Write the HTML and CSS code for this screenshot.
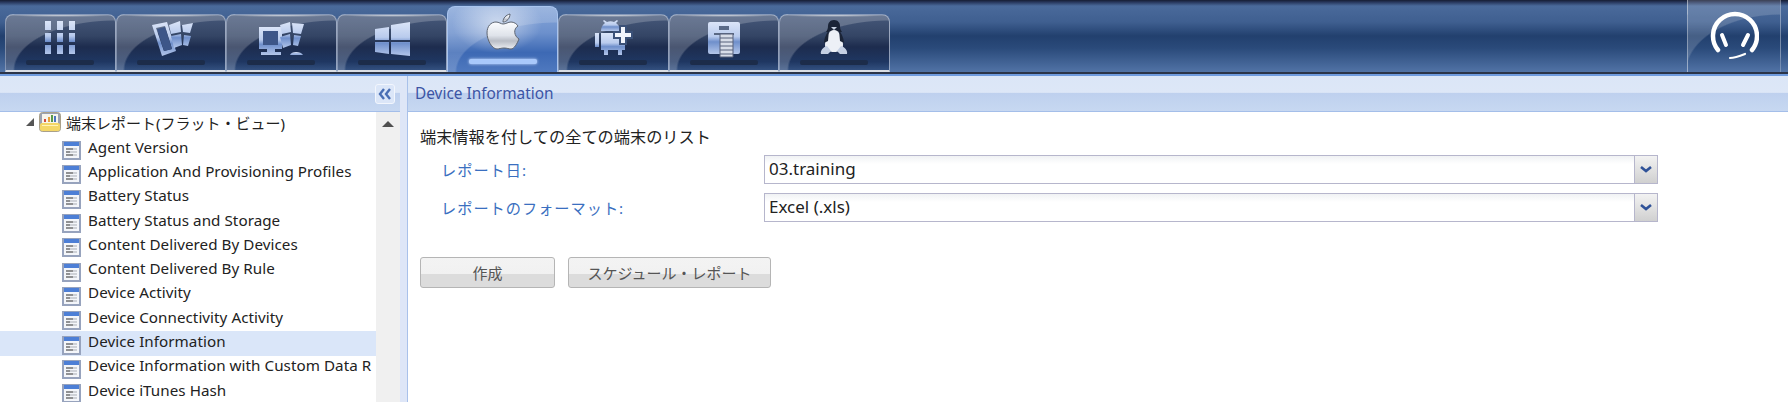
FILE: index.html
```html
<!DOCTYPE html>
<html lang="ja">

<head>
    <meta charset="UTF-8">
    <title>Device Information</title>
    <link rel="stylesheet" href="styles.css">
</head>

<body>
    <!-- shared gradients and report icon -->
    <svg class="defs" aria-hidden="true">
        <defs>
            <linearGradient id="ico" x1="0" y1="0" x2="0" y2="1">
                <stop offset="0" stop-color="#dbe5f8" />
                <stop offset=".45" stop-color="#b9cbed" />
                <stop offset=".62" stop-color="#6f8fcb" />
                <stop offset="1" stop-color="#b3c6ea" />
            </linearGradient>
            <linearGradient id="apple" x1="0" y1="0" x2="0" y2="1">
                <stop offset="0" stop-color="#fbfcff" />
                <stop offset=".5" stop-color="#dfe3ea" />
                <stop offset=".7" stop-color="#b9bdc6" />
                <stop offset="1" stop-color="#eceef2" />
            </linearGradient>
            <symbol id="report" viewBox="0 0 19 19">
                <rect x="1" y="1" width="17" height="17" fill="#f4f6fa" stroke="#97a3bd" stroke-width="2" />
                <rect x="2" y="1" width="15" height="4" fill="#4d7fd6" />
                <path d="M4 8h7M4 11h4M4 14h7" stroke="#2c2c2c" />
                <path d="M11 8h4M8 11h7M11 14h4" stroke="#a9adb5" />
            </symbol>
        </defs>
    </svg>

    <div class="topbar">
        <div class="tab">
            <svg class="tab-icon" width="40" height="40" viewBox="0 0 40 40" fill="url(#ico)">
                <path d="M5 2h6v9H5zM17 2h6v9h-6zM29 2h6v9h-6zM5 14h6v9H5zM17 14h6v9h-6zM29 14h6v9h-6zM5 26h6v9H5zM17 26h6v9h-6zM29 26h6v9h-6z" />
            </svg>
            <span class="tab-bar"></span>
        </div>
        <div class="tab">
            <svg class="tab-icon" width="48" height="40" viewBox="0 0 48 40" fill="url(#ico)">
                <path d="M5 6l15-3 9 29-14 5zM9 9l8 23 8-2-7-23z" fill-rule="evenodd" />
                <path d="M10 10l8-2 7 22-8 2z" fill="#3d5688" />
                <path d="M22 6l11-4 1 11-10 2zM35 6l11-2-3 10-7-1zM24 17l10-2 1 11-8 3zM37 16l7 1-3 10-5-1z" />
            </svg>
            <span class="tab-bar"></span>
        </div>
        <div class="tab">
            <svg class="tab-icon" width="48" height="40" viewBox="0 0 48 40" fill="url(#ico)">
                <path d="M2 8h23v22H2zM6 12v14h15V12zM10 30h8v3h6v3H4v-3h6z" fill-rule="evenodd" />
                <path d="M6 12h15v14H6z" fill="#3d5688" />
                <path d="M23 6l10-3 1 10-9 2zM35 4l12 1-3 10-8-1zM23 18l10-3 1 11-8 3zM37 16l7 1-3 10-5-1z" />
                <path d="M33 36c1-4 11-4 13 0z" />
            </svg>
            <span class="tab-bar"></span>
        </div>
        <div class="tab">
            <svg class="tab-icon" width="40" height="40" viewBox="0 0 40 40" fill="url(#ico)">
                <path d="M3 10l14-2v13H3zM19 6l19-3v18H19zM3 23h14v12L3 33zM19 23h19v14l-19-2z" />
            </svg>
            <span class="tab-bar"></span>
        </div>
        <div class="tab tab-active">
            <svg class="tab-icon" width="34" height="40" viewBox="0 0 34 40" fill="url(#apple)" stroke="#5d6470" stroke-width="1">
                <path d="M17 11c3 0 5-2 8-2 3 0 6 2 7 4-5 3-4 10 1 13-2 5-5 10-8 10-2 0-4-1-7-1s-5 1-7 1C6 36 1 27 1 20c0-7 4-11 9-11 3 0 5 2 7 2z" />
                <path d="M17 9c0-4 3-7 7-8 0 4-3 8-7 8z" />
            </svg>
            <span class="tab-bar"></span>
        </div>
        <div class="tab">
            <svg class="tab-icon" width="48" height="40" viewBox="0 0 48 40" fill="url(#ico)">
                <path d="M16 4l-2-2 1-1 3 2c2-1 5-1 7 0l3-2 1 1-2 2c3 2 4 5 4 8H12c0-3 1-6 4-8z" />
                <path d="M12 14h24v17h-3v5h-4v-5h-10v5h-4v-5h-3zM6 14h4v14H6z" />
                <path d="M30 6h8v6h6v8h-6v6h-8v-6h-6v-8h6z" fill="#3b5178" />
                <path d="M32 8h4v6h6v4h-6v6h-4v-6h-6v-4h6z" fill="#f2f5fc" />
            </svg>
            <span class="tab-bar"></span>
        </div>
        <div class="tab">
            <svg class="tab-icon" width="34" height="40" viewBox="0 0 34 40" fill="url(#ico)">
                <rect x="1" y="3" width="32" height="32" rx="2" />
                <rect x="12" y="7" width="10" height="4" fill="#5a6a88" />
                <path d="M7 15h20" stroke="#39465f" stroke-width="1.5" />
                <path d="M13 15h13v23H13z" fill="#d8dde8" stroke="#56617a" />
                <path d="M13 19h13M13 23h13M13 27h13M13 31h13M13 35h13" stroke="#56617a" />
            </svg>
            <span class="tab-bar"></span>
        </div>
        <div class="tab">
            <svg class="tab-icon" width="30" height="40" viewBox="0 0 30 40" fill="#edf0f6">
                <path d="M15 1c4 0 6 3 6 6 0 3 1 4 2 6l-16 0c1-2 2-3 2-6 0-3 2-6 6-6z" fill="#1b2437" />
                <path d="M15 11c5 0 9 8 9 15 0 5-4 7-9 7s-9-2-9-7c0-7 4-15 9-15z" />
                <path d="M10 11c-2 3-5 8-5 13l4-2zM20 11c2 3 5 8 5 13l-4-2z" fill="#1b2437" />
                <path d="M12 8h6l-3 3z" fill="#c9d2e2" />
                <path d="M8 27l4 5-3 3H2c-1-3 2-7 6-8zM22 27l-4 5 3 3h7c1-3-2-7-6-8z" fill="#c5d0e4" />
            </svg>
            <span class="tab-bar"></span>
        </div>
        <div class="support">
            <svg width="50" height="50" viewBox="0 0 50 50" fill="none" stroke="#fff" stroke-linecap="round">
                <path d="M9 39A22 22 0 1 1 43 39" stroke-width="4.5" />
                <path d="M13 24l4 10M39 24l-5 10" stroke-width="4" />
                <path d="M21 47c5 0 10-2 15-4" stroke-width="2.2" />
            </svg>
        </div>
    </div>

    <div class="main">
        <div class="left">
            <div class="panel-head">
                <span class="collapse">
                    <svg width="14" height="12" viewBox="0 0 14 12" fill="none" stroke="#4a6fb4" stroke-width="2.4"><path d="M6 1L2 6l4 5M12 1L8 6l4 5" /></svg>
                </span>
            </div>
            <div class="tree-wrap">
                <div class="tree">
                    <div class="tree-root">
                        <span class="arrow"></span>
                        <svg class="root-icon" width="22" height="20" viewBox="0 0 22 20">
                            <rect x=".5" y=".5" width="21" height="19" rx="3" fill="#9aa2b2" stroke="#a9a08a" />
                            <rect x="3" y="2" width="16" height="9" fill="#f6f4ec" />
                            <path d="M5 10V7h2v3z" fill="#d24b3c" />
                            <path d="M9 10V5h2v5z" fill="#e8a23c" />
                            <path d="M12 10V3h2v7z" fill="#5a9a4a" />
                            <path d="M15 10V4h2v6z" fill="#4a74c0" />
                            <rect x="1" y="11" width="20" height="8" rx="2" fill="#f4d768" />
                            <rect x="3" y="13" width="16" height="1" fill="#fff3b8" />
                        </svg>
                        <span>端末レポート(フラット・ビュー)</span>
                    </div>
                    <div class="item"><svg width="19" height="19"><use href="#report" /></svg><span>Agent Version</span></div>
                    <div class="item"><svg width="19" height="19"><use href="#report" /></svg><span>Application And Provisioning Profiles</span></div>
                    <div class="item"><svg width="19" height="19"><use href="#report" /></svg><span>Battery Status</span></div>
                    <div class="item"><svg width="19" height="19"><use href="#report" /></svg><span>Battery Status and Storage</span></div>
                    <div class="item"><svg width="19" height="19"><use href="#report" /></svg><span>Content Delivered By Devices</span></div>
                    <div class="item"><svg width="19" height="19"><use href="#report" /></svg><span>Content Delivered By Rule</span></div>
                    <div class="item"><svg width="19" height="19"><use href="#report" /></svg><span>Device Activity</span></div>
                    <div class="item"><svg width="19" height="19"><use href="#report" /></svg><span>Device Connectivity Activity</span></div>
                    <div class="item selected"><svg width="19" height="19"><use href="#report" /></svg><span>Device Information</span></div>
                    <div class="item"><svg width="19" height="19"><use href="#report" /></svg><span>Device Information with Custom Data R</span></div>
                    <div class="item"><svg width="19" height="19"><use href="#report" /></svg><span>Device iTunes Hash</span></div>
                </div>
                <div class="scrollbar"><span class="scroll-up"></span></div>
            </div>
        </div>
        <div class="splitter"></div>
        <div class="right">
            <div class="panel-head">
                <span class="panel-title">Device Information</span>
            </div>
            <div class="content">
                <p class="intro">端末情報を付しての全ての端末のリスト</p>
                <div class="field">
                    <label>レポート日:</label>
                    <div class="select"><span class="select-value">03.training</span><span class="select-btn"><svg width="14" height="9" viewBox="0 0 14 9"><path d="M2 2l5 4 5-4" fill="none" stroke="#2f5298" stroke-width="2.6" /></svg></span></div>
                </div>
                <div class="field">
                    <label>レポートのフォーマット:</label>
                    <div class="select"><span class="select-value">Excel (.xls)</span><span class="select-btn"><svg width="14" height="9" viewBox="0 0 14 9"><path d="M2 2l5 4 5-4" fill="none" stroke="#2f5298" stroke-width="2.6" /></svg></span></div>
                </div>
                <div class="toolbar">
                    <button class="button button-create" type="button">作成</button>
                    <button class="button button-schedule" type="button">スケジュール・レポート</button>
                </div>
            </div>
        </div>
    </div>
</body>

</html>
```

FILE: styles.css
```css
* {
    padding: 0;
    margin: 0;
    box-sizing: border-box;
}

html,
body {
    height: 402px;
    overflow: hidden;
}

body {
    display: flex;
    flex-direction: column;
    background: #fff;
    font-family: "Noto Sans", "Noto Sans CJK JP", sans-serif;
    font-size: 15.2px;
    color: #222;
}

.defs {
    position: absolute;
    width: 0;
    height: 0;
}

/* top bar with os tabs */
.topbar {
    height: 74px;
    flex: none;
    display: flex;
    align-items: flex-end;
    padding: 0 7px 0 5px;
    border-bottom: 2px solid #2b3448;
    background: linear-gradient(#161d33 0, #26355a 2px, #4a6a9b 6px, #3f5f90 22px, #22406e 36px, #2a4a7a 48px, #5173a6 72px);
}

.tab {
    width: 110.6px;
    height: 58px;
    flex: none;
    display: flex;
    flex-direction: column;
    align-items: center;
    border: 1px solid rgba(205, 215, 235, .55);
    border-bottom: 2px solid #d9dde4;
    border-radius: 8px 8px 0 0;
    background:
        radial-gradient(ellipse 60px 2px at 50% 0, rgba(255, 255, 255, .75), transparent),
        radial-gradient(ellipse 102px 50px at 100% 100%, transparent 98%, rgba(255, 255, 255, .2) 100%),
        linear-gradient(#46587a 0, #344565 38%, #1d2c4e 58%, #1f3762 85%, #33507f 100%);
}

.tab-icon {
    flex: none;
    height: 40px;
    margin-top: 4px;
}

.tab-bar {
    width: 68px;
    height: 5px;
    margin-top: 1px;
    border-radius: 2px;
    background: #1c2c4a;
}

.tab-active {
    height: 66px;
    border: 1px solid #a9c4ee;
    border-bottom: 0;
    background:
        radial-gradient(ellipse 45px 30px at 45% 25%, rgba(255, 255, 255, .55), transparent),
        radial-gradient(ellipse 102px 50px at 100% 100%, transparent 98%, rgba(255, 255, 255, .16) 100%),
        linear-gradient(#88a7d9 0, #6c90cc 40%, #3d69b4 70%, #4f79bf 100%);
}

.tab-active .tab-icon {
    margin-top: 6px;
}

.tab-active .tab-bar {
    margin-top: 6px;
    background: #a9c9fb;
    box-shadow: 0 0 3px #cfe0ff;
}

.support {
    width: 94px;
    height: 72px;
    margin-left: auto;
    display: flex;
    align-items: center;
    justify-content: center;
    border-left: 1px solid rgba(255, 255, 255, .45);
    border-right: 1px solid rgba(255, 255, 255, .25);
    background:
        radial-gradient(ellipse 95px 58px at 100% 100%, transparent 98%, rgba(255, 255, 255, .16) 100%);
}

/* panels */
.main {
    flex: 1;
    min-height: 0;
    display: flex;
    border-top: 2px solid #6f9bde;
}

.left {
    width: 400px;
    flex: none;
    display: flex;
    flex-direction: column;
}

.splitter {
    width: 8px;
    flex: none;
    background: #dee6f7;
    border-right: 1px solid #a9c1ea;
}

.right {
    flex: 1;
    display: flex;
    flex-direction: column;
}

.panel-head {
    height: 36px;
    flex: none;
    display: flex;
    align-items: center;
    justify-content: flex-end;
    border-bottom: 1px solid #a4bee9;
    background: linear-gradient(#dbe6f7 0, #dde7f7 47%, #bed0ee 48%, #c7d8f1 100%);
}

.right .panel-head {
    justify-content: flex-start;
    padding-left: 7px;
}

.panel-title {
    color: #3c55a5;
    font-size: 15.4px;
}

.collapse {
    width: 20px;
    height: 20px;
    margin-right: 5px;
    display: flex;
    align-items: center;
    justify-content: center;
    border: 1px solid #f2f6fd;
    border-radius: 3px;
    background: #dbe6f8;
}

/* report tree */
.tree-wrap {
    flex: 1;
    min-height: 0;
    display: flex;
}

.tree {
    width: 376px;
    flex: none;
    overflow: hidden;
    white-space: nowrap;
}

.tree-root {
    height: 25px;
    display: flex;
    align-items: center;
    padding: 0 0 5px 26px;
    font-size: 15px;
}

.arrow {
    width: 0;
    height: 0;
    margin-right: 5px;
    border-style: solid;
    border-width: 0 0 8px 8px;
    border-color: transparent transparent #555 transparent;
}

.root-icon {
    flex: none;
    margin-right: 5px;
}

.item {
    height: 24.3px;
    display: flex;
    align-items: center;
    padding-left: 62px;
}

.item svg {
    flex: none;
    margin-right: 7px;
    margin-top: 3px;
}

.item span {
    margin-top: -5px;
    letter-spacing: .05px;
}

.selected {
    background: #dae6f9;
}

.scrollbar {
    width: 24px;
    flex: none;
    display: flex;
    justify-content: center;
    background: #f0f0f0;
}

.scroll-up {
    width: 0;
    height: 0;
    margin-top: 9px;
    border-style: solid;
    border-width: 0 6px 6px 6px;
    border-color: transparent transparent #505050 transparent;
}

/* report form */
.content {
    flex: 1;
    padding: 14px 12px 0;
}

.intro {
    height: 22px;
    line-height: 22px;
    margin-bottom: 7px;
    font-size: 16.2px;
}

.field {
    height: 29px;
    margin-bottom: 9px;
    display: flex;
    align-items: center;
    padding-left: 21px;
}

.field label {
    width: 323px;
    flex: none;
    margin-top: -1px;
    color: #3a6fc0;
    font-size: 15.2px;
    letter-spacing: 1px;
}

.select {
    width: 894px;
    height: 29px;
    flex: none;
    display: flex;
    border: 1px solid #b6b6cc;
    background: linear-gradient(#f0f2f4, #fff 8px);
}

.select-value {
    flex: 1;
    padding-left: 4px;
    line-height: 25px;
    font-size: 17px;
}

.select-btn {
    width: 23px;
    display: flex;
    align-items: center;
    justify-content: center;
    border-left: 1px solid #b6b6cc;
    background: linear-gradient(#f2f2f2, #d0d0d0);
}

.toolbar {
    display: flex;
    gap: 13px;
    margin-top: 35px;
}

.button {
    height: 31px;
    border: 1px solid #b5b5b5;
    border-radius: 3px;
    background: linear-gradient(#f3f3f3 0, #f1f1f1 55%, #dcdcdc 56%, #dcdcdc 100%);
    color: #555;
    font-family: "Noto Sans", "Noto Sans CJK JP", sans-serif;
    font-size: 15px;
}

.button-create {
    width: 135px;
}

.button-schedule {
    width: 203px;
}
```
